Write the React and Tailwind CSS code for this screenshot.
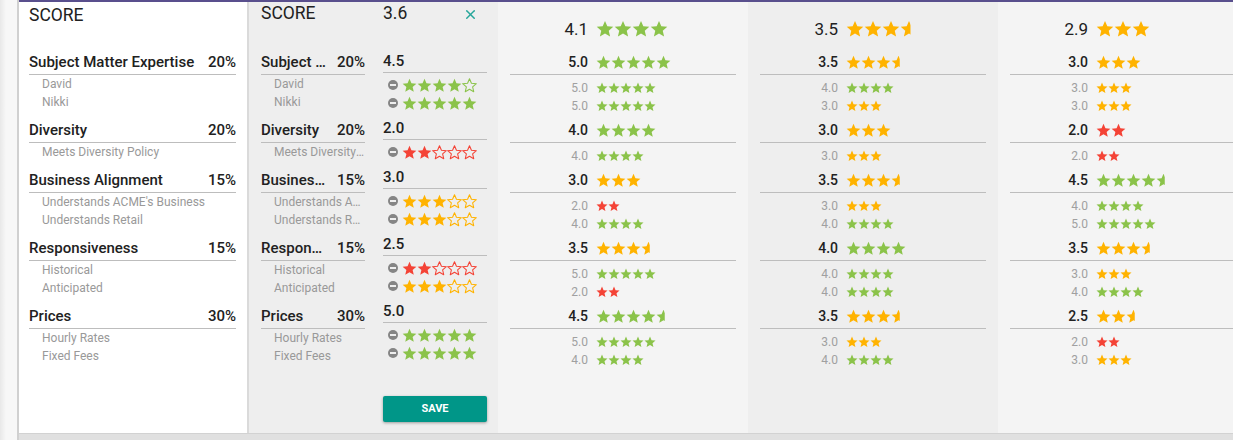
import React, { useId } from "react";
import { X } from "lucide-react";

const GREEN = "#8bc34a";
const ORANGE = "#ffb300";
const RED = "#f44336";

const colorFor = (v) => (v >= 4 ? GREEN : v >= 2.5 ? ORANGE : RED);

const STAR = "12,1.2 15.1,8.4 23,9.1 17,14.3 18.8,22 12,17.9 5.2,22 7,14.3 1,9.1 8.9,8.4";

function Star({ size, color, kind }) {
  const id = useId();
  if (kind === "empty") {
    return (
      <svg width={size} height={size} viewBox="0 0 24 24">
        <polygon points={STAR} fill="none" stroke={color} strokeWidth="1.7" strokeLinejoin="round" />
      </svg>
    );
  }
  if (kind === "half") {
    return (
      <svg width={size} height={size} viewBox="0 0 24 24">
        <defs>
          <clipPath id={id}>
            <rect x="0" y="0" width="14" height="24" />
          </clipPath>
        </defs>
        <polygon points={STAR} fill={color} clipPath={`url(#${id})`} />
      </svg>
    );
  }
  return (
    <svg width={size} height={size} viewBox="0 0 24 24">
      <polygon points={STAR} fill={color} />
    </svg>
  );
}

function Stars({ value, size, outline = false, tone }) {
  const color = colorFor(tone ?? value);
  const full = Math.floor(value);
  const half = value - full >= 0.5;
  const items = [];
  for (let i = 0; i < full; i++) items.push(<Star key={"f" + i} size={size} color={color} kind="full" />);
  if (half) items.push(<Star key="h" size={size} color={color} kind="half" />);
  if (outline) {
    for (let i = items.length; i < 5; i++) items.push(<Star key={"e" + i} size={size} color={color} kind="empty" />);
  }
  return <div className="flex items-center">{items}</div>;
}

const criteria = [
  { name: "Subject Matter Expertise", weight: "20%", items: ["David", "Nikki"], score: "4.5", mine: [4, 5] },
  { name: "Diversity", weight: "20%", items: ["Meets Diversity Policy"], score: "2.0", mine: [2] },
  { name: "Business Alignment", weight: "15%", items: ["Understands ACME's Business", "Understands Retail"], score: "3.0", mine: [3, 3] },
  { name: "Responsiveness", weight: "15%", items: ["Historical", "Anticipated"], score: "2.5", mine: [2, 3] },
  { name: "Prices", weight: "30%", items: ["Hourly Rates", "Fixed Fees"], score: "5.0", mine: [5, 5] },
];

const vendors = [
  {
    total: "4.1",
    stars: 4,
    tone: 4.1,
    bg: "bg-[#f4f4f4]",
    rows: [
      [5.0, [5.0, 5.0]],
      [4.0, [4.0]],
      [3.0, [2.0, 4.0]],
      [3.5, [5.0, 2.0]],
      [4.5, [5.0, 4.0]],
    ],
  },
  {
    total: "3.5",
    stars: 3.5,
    tone: 3.5,
    bg: "bg-[#eeeeee]",
    rows: [
      [3.5, [4.0, 3.0]],
      [3.0, [3.0]],
      [3.5, [3.0, 4.0]],
      [4.0, [4.0, 4.0]],
      [3.5, [3.0, 4.0]],
    ],
  },
  {
    total: "2.9",
    stars: 3,
    tone: 2.9,
    bg: "bg-[#f4f4f4]",
    rows: [
      [3.0, [3.0, 3.0]],
      [2.0, [2.0]],
      [4.5, [4.0, 5.0]],
      [3.5, [3.0, 4.0]],
      [2.5, [2.0, 3.0]],
    ],
  },
];

function MinusDot() {
  return (
    <span className="w-[10px] h-[10px] rounded-full bg-[#858585] flex items-center justify-center shrink-0">
      <span className="w-[6px] h-[2px] bg-[#eeeeee]" />
    </span>
  );
}

function VendorColumn({ v }) {
  return (
    <div className={`w-[250px] shrink-0 h-full ${v.bg}`}>
      <div className="h-[50px] pt-[16px] px-[12px] flex items-start">
        <div className="w-[78px] text-right text-[17px] leading-[22px] text-[#212121]">{v.total}</div>
        <div className="ml-[8px] h-[22px] flex items-center">
          <Stars value={v.stars} tone={v.tone} size={18} />
        </div>
      </div>
      <div className="px-[12px]">
        {v.rows.map(([score, subs], i) => (
          <div key={i} className="mb-[5px]">
            <div className="h-[23px] pb-[2px] border-b border-[#bdbdbd] flex items-center">
              <div className="w-[78px] text-right text-[14px] font-medium leading-[20px] text-[#212121]">
                {score.toFixed(1)}
              </div>
              <div className="ml-[8px]">
                <Stars value={score} size={15} />
              </div>
            </div>
            <div className="pt-[4px]">
              {subs.map((s, j) => (
                <div key={j} className="h-[18px] flex items-center">
                  <div className="w-[78px] text-right text-[12px] leading-[18px] text-[#a0a0a0]">{s.toFixed(1)}</div>
                  <div className="ml-[8px]">
                    <Stars value={s} size={12} />
                  </div>
                </div>
              ))}
            </div>
          </div>
        ))}
      </div>
    </div>
  );
}

export default function App() {
  return (
    <div
      className="h-[440px] w-[1233px] flex overflow-hidden bg-[#f6f6f6] text-[#212121]"
      style={{ fontFamily: "Roboto, 'Liberation Sans', sans-serif" }}
    >
      <div className="w-[17px] shrink-0 h-full bg-[linear-gradient(to_right,#e8e8e8,#f7f7f7_35%)]" />
      <div className="flex-1 min-w-0 h-full flex flex-col border-l-2 border-[#d0d0d0]">
        <div className="h-[433px] border-t-2 border-[#594f8d] flex overflow-hidden">
          {/* weights panel */}
          <div className="w-[228px] shrink-0 bg-white pl-[10px] pr-[11px]">
            <div className="h-[50px] pt-[2px] text-[17.5px] leading-[22px]">SCORE</div>
            {criteria.map((c) => (
              <div key={c.name} className="mb-[9px]">
                <div className="h-[23px] pb-[2px] border-b border-[#bdbdbd] flex justify-between text-[15px] font-medium leading-[20px]">
                  <span>{c.name}</span>
                  <span>{c.weight}</span>
                </div>
                {c.items.map((it) => (
                  <div key={it} className="h-[18px] leading-[18px] pl-[13px] text-[12px] text-[#999999]">
                    {it}
                  </div>
                ))}
              </div>
            ))}
          </div>

          {/* my score panel */}
          <div className="w-[251px] shrink-0 border-l-2 border-[#dadada] bg-[#eeeeee] pl-[12px] pr-[11px]">
            <div className="h-[49px] flex items-start text-[17.5px] leading-[22px]">
              <div className="w-[104px]">SCORE</div>
              <div className="ml-[18px] flex-1 flex justify-between">
                <span>3.6</span>
                <X size={15} strokeWidth={2.4} className="text-[#26a69a] mt-[5px] mr-[9px]" />
              </div>
            </div>
            <div className="flex">
              <div className="w-[104px] pt-[1px]">
                {criteria.map((c) => (
                  <div key={c.name} className="mb-[9px]">
                    <div className="h-[23px] pb-[2px] border-b border-[#bdbdbd] flex text-[15px] font-medium leading-[20px]">
                      <span className="flex-1 min-w-0 truncate">{c.name}</span>
                      <span className="shrink-0 ml-[8px]">{c.weight}</span>
                    </div>
                    {c.items.map((it) => (
                      <div key={it} className="h-[18px] leading-[18px] pl-[13px] text-[12px] text-[#999999] truncate">
                        {it}
                      </div>
                    ))}
                  </div>
                ))}
              </div>
              <div className="w-[104px] ml-[18px]">
                {criteria.map((c) => (
                  <div key={c.name} className="mb-[6px]">
                    <div className="h-[22px] pb-[1px] border-b border-[#bdbdbd] text-[15px] font-medium leading-[20px]">
                      {c.score}
                    </div>
                    <div className="pt-[3px]">
                      {c.mine.map((m, j) => (
                        <div key={j} className="h-[18px] pl-[5px] flex items-center gap-[4px]">
                          <MinusDot />
                          <Stars value={m} size={15} outline />
                        </div>
                      ))}
                    </div>
                  </div>
                ))}
                <button className="mt-[28px] w-[104px] h-[26px] bg-[#009688] text-white text-[11px] font-bold rounded-[2px] shadow-[0_1px_3px_rgba(0,0,0,0.35)]">
                  SAVE
                </button>
              </div>
            </div>
          </div>

          {vendors.map((v) => (
            <VendorColumn key={v.total} v={v} />
          ))}
        </div>
        <div className="flex-1 bg-[#e0e0e0] border-t border-[#d2d2d2]" />
      </div>
    </div>
  );
}
